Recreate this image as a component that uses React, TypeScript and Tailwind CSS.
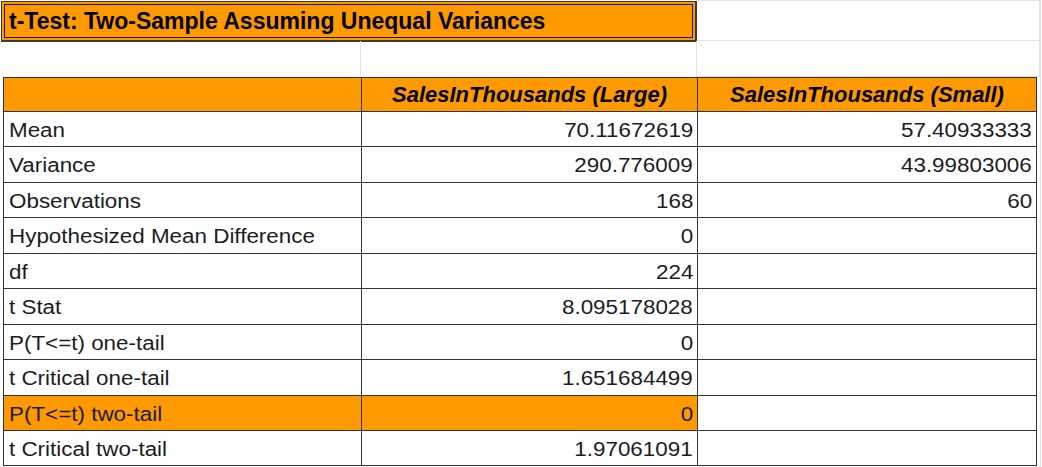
import React from "react";

const rows: { label: string; a: string; b: string; h: string; hl?: boolean }[] = [
  { label: "Mean", a: "70.11672619", b: "57.40933333", h: "h-[35px]" },
  { label: "Variance", a: "290.776009", b: "43.99803006", h: "h-[36px]" },
  { label: "Observations", a: "168", b: "60", h: "h-[35px]" },
  { label: "Hypothesized Mean Difference", a: "0", b: "", h: "h-[36px]" },
  { label: "df", a: "224", b: "", h: "h-[35px]" },
  { label: "t Stat", a: "8.095178028", b: "", h: "h-[36px]" },
  { label: "P(T<=t) one-tail", a: "0", b: "", h: "h-[35px]" },
  { label: "t Critical one-tail", a: "1.651684499", b: "", h: "h-[36px]" },
  { label: "P(T<=t) two-tail", a: "0", b: "", h: "h-[35px]", hl: true },
  { label: "t Critical two-tail", a: "1.97061091", b: "", h: "h-[35px]" },
];

export default function App() {
  return (
    <div className="w-[1042px] h-[467px] bg-white overflow-hidden relative text-[#1c1c24]" style={{ fontFamily: '"Liberation Sans", Arial, sans-serif' }}>
      {/* top rows */}
      <div className="flex h-[41px]">
        <div className="w-[698px] h-[42px] pl-[1px] pt-[1px]">
          <div className="w-[696px] h-[41px] border border-b-2 border-r-2 border-[#3a3a3a] bg-[#ff9900] p-[2px]">
            <div className="h-full border border-[#1a1a1a] flex items-center pl-[4px] text-[23px] font-bold text-black">
              t-Test: Two-Sample Assuming Unequal Variances
            </div>
          </div>
        </div>
        <div className="w-[342px] border-r border-b border-t border-[#e3e3e3]" />
      </div>
      <div className="flex h-[36px]">
        <div className="w-[361px] border-r border-[#e3e3e3]" />
        <div className="w-[336px] border-r border-[#e3e3e3]" />
        <div className="w-[343px] border-r border-b border-[#e3e3e3]" />
      </div>
      {/* table */}
      <div className="ml-[3px] w-[1034px] border-l border-t border-[#333]">
        <div className="flex h-[34px] bg-[#ff9900] border-b border-[#333] font-bold italic text-[22px] text-black">
          <div className="w-[358px] border-r border-[#333]" />
          <div className="w-[336px] border-r border-[#333] flex items-center justify-center">SalesInThousands (Large)</div>
          <div className="flex-1 border-r border-[#333] flex items-center justify-center">SalesInThousands (Small)</div>
        </div>
        {rows.map((r) => (
          <div key={r.label} className={`flex ${r.h} border-b border-[#333] text-[20px]`}>
            <div className={`w-[358px] border-r border-[#333] flex items-center pl-[5px] pt-[1px] ${r.hl ? "bg-[#ff9900]" : ""}`}>
              <span className="inline-block origin-left scale-x-[1.12] whitespace-nowrap">{r.label}</span>
            </div>
            <div className={`w-[336px] border-r border-[#333] flex items-center justify-end pr-[4px] pt-[1px] ${r.hl ? "bg-[#ff9900]" : ""}`}>
              <span className="inline-block origin-right scale-x-[1.12] whitespace-nowrap">{r.a}</span>
            </div>
            <div className="flex-1 border-r border-[#333] flex items-center justify-end pr-[4px] pt-[1px]">
              <span className="inline-block origin-right scale-x-[1.12] whitespace-nowrap">{r.b}</span>
            </div>
          </div>
        ))}
      </div>
      <div className="absolute right-[1px] top-0 h-full w-px bg-[#e3e3e3]" />
    </div>
  );
}
